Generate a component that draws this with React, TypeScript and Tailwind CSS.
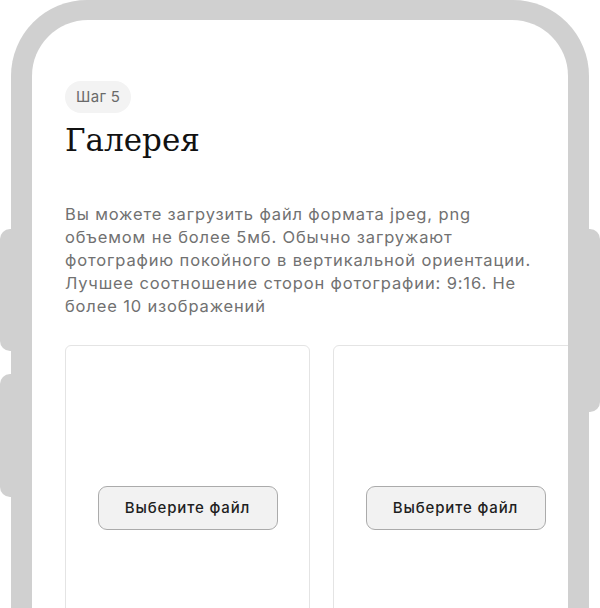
import React from "react";

const lines = [
  "Вы можете загрузить файл формата jpeg, png",
  "объемом не более 5мб. Обычно загружают",
  "фотографию покойного в вертикальной ориентации.",
  "Лучшее соотношение сторон фотографии: 9:16. Не",
  "более 10 изображений",
];

function UploadCard() {
  return (
    <div className="flex h-[326px] w-[245px] shrink-0 items-center justify-center rounded-[6px] border border-[#e4e4e4] bg-white">
      <button
        type="button"
        className="h-[44px] w-[180px] rounded-[9px] border border-[#ababab] bg-[#f2f2f2] text-[15px] font-medium tracking-[0.85px] text-[#1f1f1f]"
      >
        Выберите файл
      </button>
    </div>
  );
}

export default function App() {
  return (
    <div
      className="flex h-[608px] w-[600px] overflow-hidden bg-white"
      style={{ fontFamily: "Inter, 'Noto Sans', sans-serif" }}
    >
      {/* left side buttons */}
      <div className="flex w-[11px] shrink-0 flex-col gap-[23px] pt-[229px]">
        <div className="h-[122px] rounded-l-[10px] bg-[#d0d0d0]" />
        <div className="h-[123px] rounded-l-[10px] bg-[#d0d0d0]" />
      </div>

      <div className="h-[720px] w-[578px] shrink-0 rounded-[76px] bg-[#d0d0d0] px-[21px] pt-[20px]">
        <div className="h-full w-full overflow-hidden rounded-[56px] bg-white pl-[33px] pt-[61px]">
          <span className="inline-flex h-[32px] items-center rounded-full bg-[#f3f3f3] px-[11px] text-[15px] tracking-[0.3px] text-[#6a6a6a]">
            Шаг 5
          </span>
          <h1
            className="mt-[9px] text-[31px] leading-[36px] text-[#111]"
            style={{ fontFamily: "'DejaVu Serif', 'Liberation Serif', serif" }}
          >
            Галерея
          </h1>
          <p className="mt-[45px] whitespace-nowrap text-[16.5px] leading-[23px] tracking-[0.85px] text-[#717171]">
            {lines.map((line) => (
              <span key={line} className="block">
                {line}
              </span>
            ))}
          </p>
          <div className="mt-[27px] flex gap-[23px]">
            <UploadCard />
            <UploadCard />
          </div>
        </div>
      </div>

      {/* right side button */}
      <div className="flex w-[11px] shrink-0 flex-col pt-[229px]">
        <div className="h-[183px] rounded-r-[10px] bg-[#d0d0d0]" />
      </div>
    </div>
  );
}
